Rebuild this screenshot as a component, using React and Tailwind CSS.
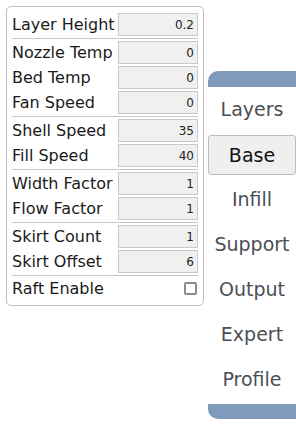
import React from "react";

const groups = [
  [["Layer Height", "0.2"]],
  [["Nozzle Temp", "0"], ["Bed Temp", "0"], ["Fan Speed", "0"]],
  [["Shell Speed", "35"], ["Fill Speed", "40"]],
  [["Width Factor", "1"], ["Flow Factor", "1"]],
  [["Skirt Count", "1"], ["Skirt Offset", "6"]],
];

const tabs = ["Layers", "Base", "Infill", "Support", "Output", "Expert", "Profile"];

function Row({ label, value }) {
  return (
    <div className="flex h-[25px] items-center justify-between">
      <span className="text-[16px] leading-none text-[#1a1a1a]">{label}</span>
      <div className="flex h-[23px] w-[80px] items-center justify-end border border-[#c9c9c9] bg-[#f0f0f0] pr-[3px] text-[12px] leading-none text-[#222]">
        {value}
      </div>
    </div>
  );
}

function Sep() {
  return <div className="my-[1px] h-[1px] bg-[#c8c8c8]" />;
}

export default function App() {
  return (
    <div
      className="flex h-[429px] w-[296px] items-start overflow-hidden bg-white"
      style={{ fontFamily: '"DejaVu Sans", sans-serif' }}
    >
      <div className="ml-[6px] mt-[6px] w-[198px] rounded-[5px] border border-[#bdbdbd] bg-white px-[5px] py-[5px]">
        {groups.map((g, gi) => (
          <React.Fragment key={gi}>
            {g.map(([l, v]) => (
              <Row key={l} label={l} value={v} />
            ))}
            <Sep />
          </React.Fragment>
        ))}
        <div className="flex h-[23px] items-center justify-between">
          <span className="text-[16px] leading-none text-[#1a1a1a]">Raft Enable</span>
          <div className="mr-[1px] h-[13px] w-[13px] rounded-[2px] border-[2px] border-[#8a8a94] bg-white" />
        </div>
      </div>
      <div className="ml-[4px] mt-[71px] flex w-[88px] flex-col">
        <div className="h-[16px] rounded-tl-[10px] bg-[#7f9aba]" />
        {tabs.map((t) =>
          t === "Base" ? (
            <div
              key={t}
              className="mb-[2px] mt-[3px] flex h-[40px] items-center justify-center rounded-[3px] border border-[#bcbcbc] bg-[#efefef] text-[19px] text-[#111]"
            >
              {t}
            </div>
          ) : (
            <div
              key={t}
              className="flex h-[45px] items-center justify-center text-[19px] text-[#4b4f55]"
            >
              {t}
            </div>
          )
        )}
        <div className="mt-[2px] h-[15px] rounded-bl-[10px] bg-[#7f9aba]" />
      </div>
    </div>
  );
}
